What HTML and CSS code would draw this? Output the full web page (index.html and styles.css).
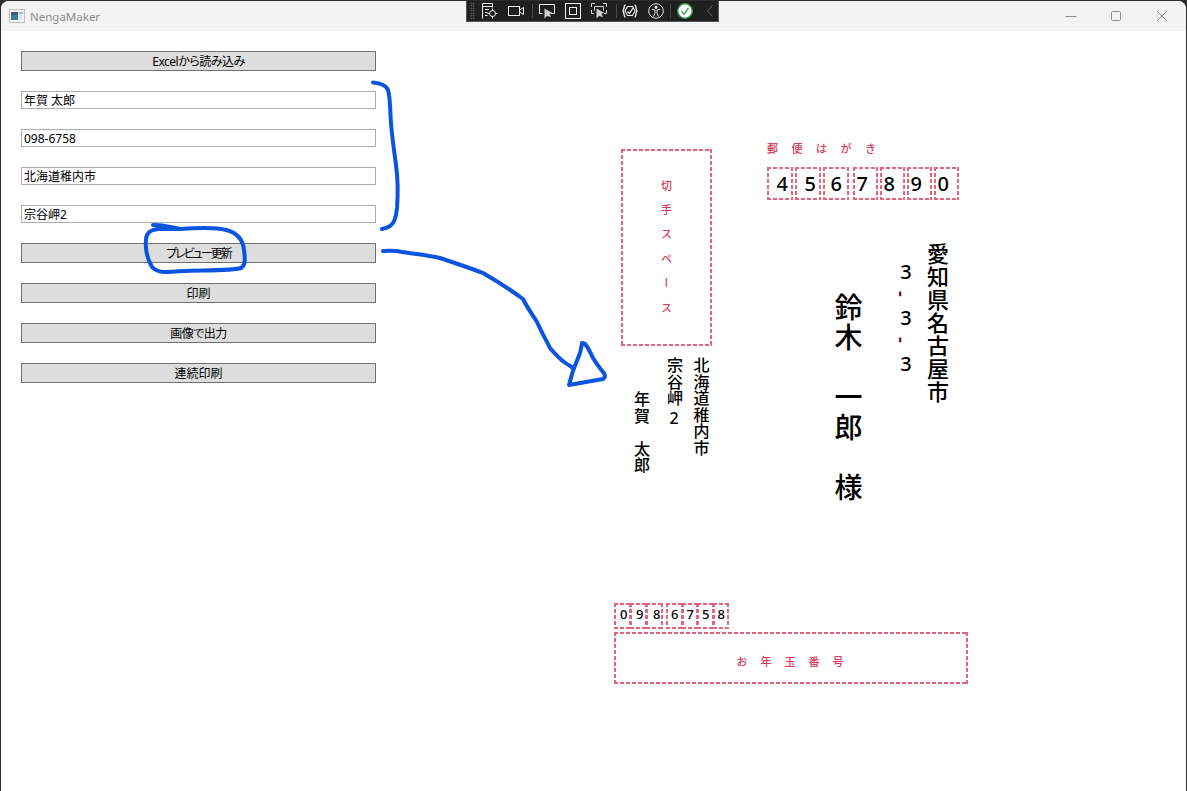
FILE: index.html
```html
<!DOCTYPE html>
<html lang="ja">
<head>
<meta charset="utf-8">
<title>NengaMaker</title>
<link rel="stylesheet" href="styles.css">
</head>
<body>
<div class="window">
  <header class="titlebar">
    <svg class="app-icon" width="16" height="16" viewBox="0 0 16 16"><rect x="0.5" y="1.5" width="15" height="13" fill="#f4f4f4" stroke="#bdbdbd"/><rect x="2" y="4" width="7" height="8" fill="#3f7f86"/><rect x="2" y="4" width="7" height="3" fill="#4a5a78"/><rect x="10" y="4" width="4" height="2" fill="#9fb4c8"/><rect x="10" y="7" width="4" height="5" fill="#dfe6ea"/></svg>
    <span class="app-title">NengaMaker</span>
    <div class="caption">
      <svg class="cap-btn" width="46" height="30" viewBox="0 0 46 30"><path d="M17.5 15.5h11" stroke="#8f8f8f" fill="none"/></svg>
      <svg class="cap-btn" width="46" height="30" viewBox="0 0 46 30"><rect x="17.5" y="10.5" width="9" height="9" rx="1" stroke="#8f8f8f" fill="none"/></svg>
      <svg class="cap-btn" width="46" height="30" viewBox="0 0 46 30"><path d="M17 10l10 10M27 10l-10 10" stroke="#8f8f8f" fill="none"/></svg>
    </div>
  </header>

  <div class="debug-bar">
    <span class="grip"></span>
    <svg class="ti ti-a" width="16" height="16" viewBox="0 0 16 16" fill="none" stroke="#f0f0f0"><path d="M.5 15.500V.500h10v4M.5 3.500h10M3 6.500h4M3 9.500h2.500M3 12.500h2.500"/><circle cx="10.500" cy="10.500" r="3"/><path d="M10.500 5.500v2.500M10.500 13v2.500M5.500 10.500H8M13 10.500h2.500"/></svg>
    <svg class="ti ti-b" width="16" height="16" viewBox="0 0 16 16" fill="none" stroke="#f0f0f0"><rect x="0.500" y="3.500" width="11" height="9"/><path d="M11.500 7l4-2.500v7l-4-2.500"/></svg>
    <i class="sep sep-a"></i>
    <svg class="ti ti-c" width="16" height="16" viewBox="0 0 16 16" fill="none" stroke="#f0f0f0"><path d="M3.500 10.500h-3v-9h15v9h-4"/><path d="M5.500 5.500v10l2.500-2.500 4 1-1.500-3.500 3-.5z" fill="#cfcfcf" stroke="none"/></svg>
    <svg class="ti ti-b" width="16" height="16" viewBox="0 0 16 16" fill="none" stroke="#f0f0f0"><rect x="0.500" y="0.500" width="15" height="15"/><rect x="4.500" y="4.500" width="7" height="7"/></svg>
    <svg class="ti ti-b" width="16" height="16" viewBox="0 0 16 16" fill="none" stroke="#d6d6d6"><path d="M4 .5H.5V4M12 .5h3.500V4M.5 7v3.500H3M15.500 7v3.500H13M3.500 3.500h9v4M3.500 3.500v4"/><path d="M5.500 5.500v10l2.500-2.500 4 1-1.500-3.500 3-.5z" fill="#cfcfcf" stroke="none"/></svg>
    <i class="sep sep-b"></i>
    <svg class="ti ti-d" width="16" height="16" viewBox="0 0 16 16" fill="none" stroke="#f0f0f0"><path d="M3.500 2C1.500 2 2.500 6.500 1 8c1.500 1.500.5 6 2.500 6M12.500 2c2 0 1 4.500 2.500 6-1.500 1.500-.5 6-2.500 6" stroke-width="1.300"/><path d="M5.500 3.500h5L13 8l-2.500 4.500h-5L3 8z" stroke-width="1.100"/><path d="M5.500 8.500l2 2L11 5" stroke-width="1.300"/></svg>
    <svg class="ti ti-b" width="16" height="16" viewBox="0 0 16 16" fill="none" stroke="#e0e0e0"><circle cx="8" cy="8" r="7.300"/><circle cx="8" cy="4.300" r="1.200" fill="#e0e0e0"/><path d="M3.800 6.300L7 7v3l-1.500 3.500M12.200 6.300L9 7v3l1.500 3.500"/></svg>
    <i class="sep sep-c"></i>
    <svg class="ti ti-e" width="16" height="16" viewBox="0 0 16 16" fill="none"><circle cx="8" cy="8" r="7.200" fill="#fff" stroke="#3aa651" stroke-width="1.400"/><path d="M4.500 8.300l2.500 3 4.500-6.500" stroke="#2e9b48" stroke-width="1.300"/></svg>
    <svg class="ti ti-f" width="6" height="12" viewBox="0 0 6 12" fill="none" stroke="#6c6c6c"><path d="M5.500 .5L.500 6l5 5.500"/></svg>
  </div>

  <main class="content">
    <section class="form">
      <button class="action tight-s" type="button">Excelから読み込み</button>
      <div class="field">年賀 太郎</div>
      <div class="field">098-6758</div>
      <div class="field">北海道稚内市</div>
      <div class="field">宗谷岬2</div>
      <button class="action tight-l" type="button">プレビュー更新</button>
      <button class="action" type="button">印刷</button>
      <button class="action tight-s" type="button">画像で出力</button>
      <button class="action" type="button">連続印刷</button>
    </section>

    <section class="postcard">
      <div class="stamp dash"><span class="stamp-label">切手スペース</span></div>
      <div class="card-title">郵便はがき</div>
      <div class="zip">
        <span class="zip-d dash zip-wide">4</span><span class="zip-d dash zip-wide">5</span><span class="zip-d dash zip-wide zip-end">6</span><span class="zip-d dash">7</span><span class="zip-d dash">8</span><span class="zip-d dash">9</span><span class="zip-d dash">0</span>
      </div>
      <div class="vt to-addr">愛知県名古屋市</div>
      <div class="to-num"><span>3</span><span class="tick">-</span><span>3</span><span class="tick">-</span><span>3</span></div>
      <div class="vt to-name">鈴木　一郎　様</div>
      <div class="vt from from-addr1">北海道稚内市</div>
      <div class="vt from from-addr2">宗谷岬2</div>
      <div class="vt from from-name">年賀　太郎</div>
      <div class="szip">
        <span class="szip-d dash">0</span><span class="szip-d dash">9</span><span class="szip-d dash szip-end">8</span><span class="szip-d dash szip-b">6</span><span class="szip-d dash szip-b">7</span><span class="szip-d dash szip-b">5</span><span class="szip-d dash szip-b">8</span>
      </div>
      <div class="lottery dash">お年玉番号</div>
    </section>
  </main>

  <svg class="ink" width="1187" height="791" viewBox="0 0 1187 791" fill="none" stroke="#0a55e0" stroke-width="4" stroke-linecap="round" stroke-linejoin="round">
    <path d="M373 82.500C380 83 386 85 388 90C390 97 390 105 390.500 115C391 130 394 150 396 165C398 180 398 195 397 208C396 218 394 224 390 226C387 228 384 228.500 382 229"/>
    <path d="M153 225C162 224.500 170 227 181 229C195 228 215 227 226 230C238 233 243 240 244 250C245 258 246 265 241 268C232 271 200 270 182 271C170 272 158 274 152 267C148 260 145 250 146 240C146 233 150 230 158 229L181 229"/>
    <path d="M383 251C390 250.500 396 250.500 402 252C415 254 428 255 440 258C455 263 470 268 483 273C497 281 512 291 523 299C528 309 532 314 537 322C541 331 546 340 550 348C556 355 560 359 564 362C568 365 571 366 573 368"/>
    <path d="M582 343C581 350 580 354 578 358C574 367 571 376 569 385C580 383 592 381 603 379C606 377 605 374 603 372C599 367 596 363 593 358C590 352 588 347 585 344Z"/>
  </svg>
</div>
</body>
</html>
```
FILE: styles.css
```css
* { box-sizing: border-box; }
html, body { margin: 0; height: 100%; }
body {
  background: #2c2c2c;
  overflow: hidden;
  font-family: "Noto Sans", "Noto Sans CJK JP", sans-serif;
  color: #000;
}
.window {
  position: relative;
  margin: 1px 1px 0;
  height: 790px;
  background: #fff;
  border-radius: 8px 8px 0 0;
  overflow: hidden;
  display: flex;
  flex-direction: column;
}
.titlebar {
  height: 30px;
  flex: none;
  background: #f3f3f3;
  display: flex;
  align-items: center;
  padding-left: 8px;
}
.app-icon { flex: none; }
.app-title { margin-left: 5px; font-size: 11.500px; color: #8c8c8c; }
.caption { margin-left: auto; display: flex; }
.cap-btn { display: block; }

.debug-bar {
  position: absolute;
  left: 465px;
  top: 0;
  width: 253px;
  height: 21px;
  background: #1f1f1f;
  border: 1px solid #555;
  border-top: 0;
  display: flex;
  align-items: center;
  padding-left: 3px;
}
.grip {
  flex: none;
  width: 5px;
  height: 18px;
  background-image: radial-gradient(#777 0.7px, transparent 0.9px);
  background-size: 2.500px 2.500px;
}
.ti { flex: none; display: block; }
.ti-a { margin-left: 7px; }
.ti-b { margin-left: 10px; }
.ti-c { margin-left: 6px; }
.ti-d { margin-left: 5px; }
.ti-e { margin-left: 6px; }
.ti-f { margin-left: 14px; }
.sep { flex: none; width: 1px; height: 14px; background: #4a4a4a; }
.sep-a { margin-left: 8px; }
.sep-b { margin-left: 9px; }
.sep-c { margin-left: 6px; }

.content { flex: 1; display: flex; align-items: flex-start; }
.form {
  width: 355px;
  margin: 20px 0 0 20px;
  display: flex;
  flex-direction: column;
  gap: 20px;
  flex: none;
}
.action {
  height: 20px;
  padding: 0;
  background: #dddddd;
  border: 1px solid #707070;
  border-radius: 0;
  font: 12px/20px "Noto Sans", "Noto Sans CJK JP", sans-serif;
  font-feature-settings: "palt";
  color: #000;
  text-align: center;
}
.tight-s { letter-spacing: -0.500px; }
.tight-l { letter-spacing: -2px; }
.field {
  height: 18px;
  border: 1px solid #abadb3;
  background: #fff;
  padding-left: 2px;
  font-size: 12px;
  line-height: 18px;
}

.dash {
  border: 1px solid transparent;
  background-origin: border-box;
  background-image:
    linear-gradient(90deg, #e5647d 4px, transparent 4px),
    linear-gradient(90deg, #e5647d 4px, transparent 4px),
    linear-gradient(180deg, #e5647d 4px, transparent 4px),
    linear-gradient(180deg, #e5647d 4px, transparent 4px);
  background-size: 6px 2px, 6px 2px, 2px 6px, 2px 6px;
  background-position: 0 0, 0 100%, 0 0, 100% 0;
  background-repeat: repeat-x, repeat-x, repeat-y, repeat-y;
}

.postcard {
  position: relative;
  flex: none;
  width: 380px;
  height: 560px;
  margin: 109px 0 0 224px;
}
.stamp {
  position: absolute;
  left: 21px;
  top: 9px;
  width: 91px;
  height: 197px;
  display: flex;
  justify-content: center;
  padding-top: 30px;
}
.stamp-label {
  writing-mode: vertical-rl;
  text-orientation: upright;
  font-size: 11px;
  line-height: 14px;
  letter-spacing: 13.400px;
  color: #d83a58;
  font-weight: 500;
  margin-right: 2px;
}
.card-title {
  position: absolute;
  left: 167px;
  top: 1px;
  font-size: 11px;
  line-height: 16px;
  letter-spacing: 13.500px;
  color: #d83a58;
  font-weight: 500;
  white-space: nowrap;
}
.zip {
  position: absolute;
  left: 167px;
  top: 27px;
  display: flex;
  gap: 2px;
}
.zip-d {
  width: 25px;
  height: 33px;
  font-size: 20px;
  font-weight: 500;
  line-height: 31px;
  padding-left: 2.500px;
}
.zip-wide { width: 26px; padding-left: 8.500px; }
.zip-end { margin-right: 2px; padding-left: 6.500px; }

.vt {
  position: absolute;
  writing-mode: vertical-rl;
  text-orientation: upright;
  white-space: nowrap;
  font-weight: 500;
}
.to-addr {
  left: 325px;
  top: 103px;
  font-size: 22px;
  line-height: 24px;
  letter-spacing: 1px;
}
.to-num {
  position: absolute;
  left: 294px;
  top: 120px;
  width: 24px;
  display: flex;
  flex-direction: column;
  align-items: center;
  font-size: 20px;
  font-weight: 500;
  line-height: 23px;
}
.tick {
  writing-mode: vertical-rl;
  color: #6e0a1a;
  height: 23px;
  padding-top: 8px;
  margin-right: 8px;
  font-size: 18px;
  line-height: 24px;
  font-weight: 700;
}
.to-name {
  left: 232.500px;
  top: 153px;
  font-size: 28px;
  line-height: 30px;
  letter-spacing: 2px;
}
.from {
  font-size: 16px;
  line-height: 18px;
  letter-spacing: 0.600px;
}
.from-addr1 { left: 91.500px; top: 217px; }
.from-addr2 { left: 65px; top: 217px; }
.from-name { left: 32px; top: 251px; }

.szip {
  position: absolute;
  left: 14px;
  top: 463px;
  display: flex;
}
.szip-d {
  width: 17px;
  height: 26px;
  margin-right: -1px;
  font-size: 13px;
  font-weight: 500;
  line-height: 20px;
  padding-left: 5px;
}
.szip-d.szip-end { margin-right: 3px; padding-left: 6px; }
.szip-b { width: 16.500px; padding-left: 4px; }
.lottery {
  position: absolute;
  left: 14px;
  top: 492px;
  width: 354px;
  height: 52px;
  font-size: 11px;
  font-weight: 500;
  line-height: 58px;
  letter-spacing: 13px;
  padding-left: 11px;
  color: #d83a58;
  text-align: center;
}
.ink {
  position: absolute;
  left: -1px;
  top: -1px;
  pointer-events: none;
}
```
